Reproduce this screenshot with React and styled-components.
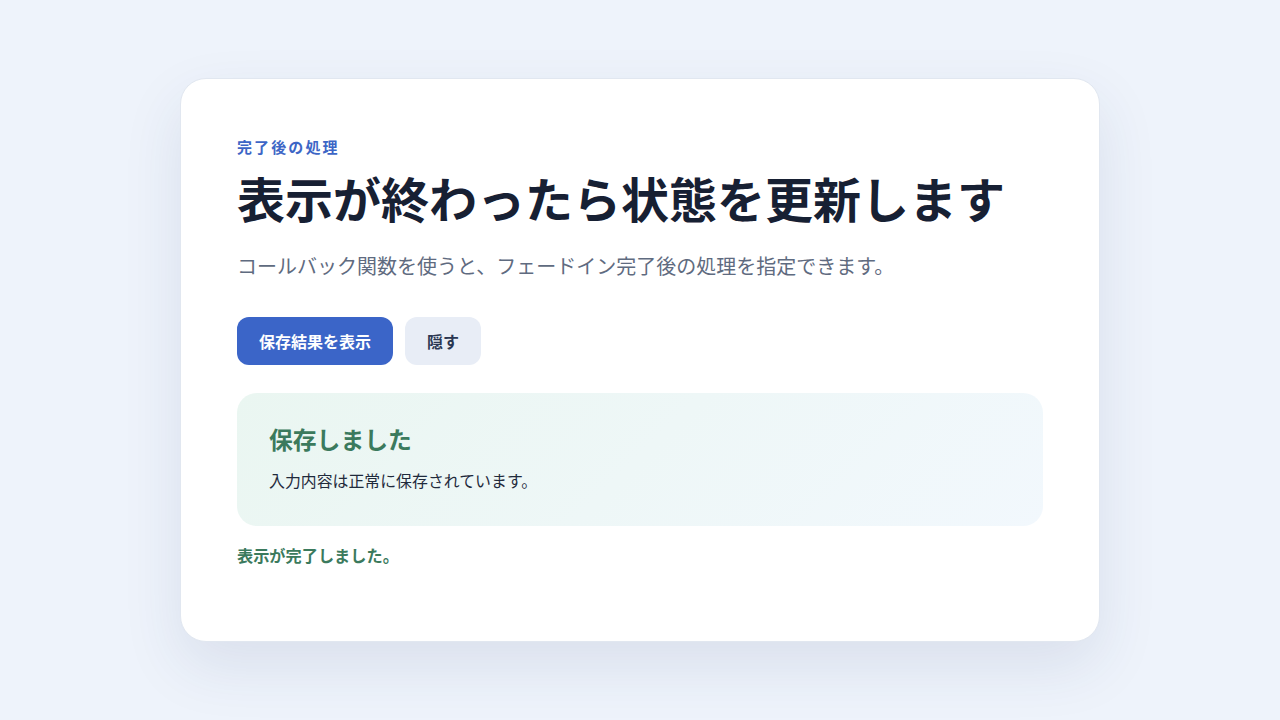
import React, { useState } from 'react'
import styled, { createGlobalStyle } from 'styled-components'

const GlobalStyle = createGlobalStyle`
  * { box-sizing: border-box; }
  html, body { margin: 0; padding: 0; }
  body {
    background: #eef3fb;
    font-family: Inter, "Noto Sans CJK JP", "Noto Sans", sans-serif;
    color: #172033;
  }
`

const Page = styled.main`
  min-height: 100vh;
  display: flex;
  align-items: center;
  justify-content: center;
`

const Card = styled.section`
  width: 920px;
  background: #ffffff;
  border: 1px solid #e1e7f0;
  border-radius: 26px;
  padding: 57px 56px 73px;
  box-shadow: 0 24px 60px rgba(40, 60, 110, 0.1);
`

const Eyebrow = styled.p`
  margin: 0;
  font-size: 15px;
  line-height: 24px;
  font-weight: 700;
  letter-spacing: 0.14em;
  color: #3d66c6;
`

const Title = styled.h1`
  margin: 12px 0 0;
  font-size: 48px;
  line-height: 57px;
  font-weight: 700;
  color: #172033;
`

const Lead = styled.p`
  margin: 22px 0 0;
  font-size: 20px;
  line-height: 32px;
  color: #5f6b80;
`

const Actions = styled.div`
  display: flex;
  gap: 12px;
  margin-top: 34px;
`

const Button = styled.button`
  height: 48px;
  padding: 0 22px;
  border: none;
  border-radius: 12px;
  font-family: inherit;
  font-size: 16px;
  font-weight: 700;
  cursor: pointer;
  background: ${p => (p.$primary ? '#3b65c8' : '#e8edf6')};
  color: ${p => (p.$primary ? '#ffffff' : '#2b3752')};
`

const Notice = styled.div`
  margin-top: 28px;
  padding: 32px;
  border-radius: 20px;
  background: linear-gradient(135deg, #eaf6f1 0%, #f2f8fd 100%);
`

const NoticeTitle = styled.h2`
  margin: 0;
  font-size: 23.8px;
  line-height: 31px;
  font-weight: 700;
  color: #3b7a5d;
`

const NoticeText = styled.p`
  margin: 14px 0 0;
  font-size: 15.9px;
  line-height: 24px;
  color: #1f2a3c;
`

const Status = styled.p`
  margin: 18px 0 0;
  font-size: 16.2px;
  line-height: 24px;
  font-weight: 700;
  color: #3b7a5d;
`

export default () => {
  const [shown, setShown] = useState(true)

  return (
    <>
      <GlobalStyle />
      <Page>
        <Card>
          <Eyebrow>完了後の処理</Eyebrow>
          <Title>表示が終わったら状態を更新します</Title>
          <Lead>コールバック関数を使うと、フェードイン完了後の処理を指定できます。</Lead>
          <Actions>
            <Button $primary onClick={() => setShown(true)}>保存結果を表示</Button>
            <Button onClick={() => setShown(false)}>隠す</Button>
          </Actions>
          <Notice style={{ visibility: shown ? 'visible' : 'hidden' }}>
            <NoticeTitle>保存しました</NoticeTitle>
            <NoticeText>入力内容は正常に保存されています。</NoticeText>
          </Notice>
          <Status>{shown ? '表示が完了しました。' : '\u00a0'}</Status>
        </Card>
      </Page>
    </>
  )
}
